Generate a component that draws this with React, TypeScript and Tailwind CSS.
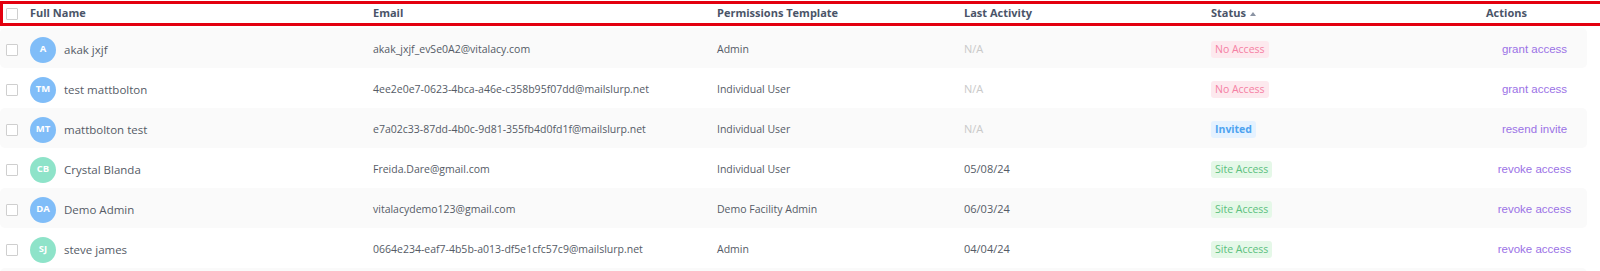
import React from 'react';

type UserRow = {
    id: number;
    initials: string;
    name: string;
    email: string;
    template: string;
    lastActivity: string;
    status: 'No Access' | 'Invited' | 'Site Access';
    action: string;
    avatar: 'blue' | 'green';
};

const users: UserRow[] = [
    { id: 1, initials: 'A', name: 'akak jxjf', email: 'akak_jxjf_evSe0A2@vitalacy.com', template: 'Admin', lastActivity: 'N/A', status: 'No Access', action: 'grant access', avatar: 'blue' },
    { id: 2, initials: 'TM', name: 'test mattbolton', email: '4ee2e0e7-0623-4bca-a46e-c358b95f07dd@mailslurp.net', template: 'Individual User', lastActivity: 'N/A', status: 'No Access', action: 'grant access', avatar: 'blue' },
    { id: 3, initials: 'MT', name: 'mattbolton test', email: 'e7a02c33-87dd-4b0c-9d81-355fb4d0fd1f@mailslurp.net', template: 'Individual User', lastActivity: 'N/A', status: 'Invited', action: 'resend invite', avatar: 'blue' },
    { id: 4, initials: 'CB', name: 'Crystal Blanda', email: 'Freida.Dare@gmail.com', template: 'Individual User', lastActivity: '05/08/24', status: 'Site Access', action: 'revoke access', avatar: 'green' },
    { id: 5, initials: 'DA', name: 'Demo Admin', email: 'vitalacydemo123@gmail.com', template: 'Demo Facility Admin', lastActivity: '06/03/24', status: 'Site Access', action: 'revoke access', avatar: 'blue' },
    { id: 6, initials: 'SJ', name: 'steve james', email: '0664e234-eaf7-4b5b-a013-df5e1cfc57c9@mailslurp.net', template: 'Admin', lastActivity: '04/04/24', status: 'Site Access', action: 'revoke access', avatar: 'green' },
];

const cols = 'grid grid-cols-[30px_343px_344px_247px_247px_275px_97px] items-center';

const Checkbox = () => (
    <span className="ml-[6px] block h-[12px] w-[12px] rounded-[1px] border border-[#cfcfcf] bg-white" />
);

const StatusBadge: React.FC<{ status: UserRow['status'] }> = ({ status }) => {
    if (status === 'Invited') {
        return <span className="block rounded-[3px] bg-[#e5f2ff] px-[4px] text-[10.5px] leading-[17px] font-bold text-[#4ea3f0]">Invited</span>;
    }
    if (status === 'No Access') {
        return <span className="block rounded-[3px] bg-[#fde9ee] px-[4px] text-[10.5px] leading-[17px] text-[#f57fa3]">No Access</span>;
    }
    return <span className="block rounded-[3px] bg-[#e5f8e8] px-[4px] text-[10.5px] leading-[17px] text-[#5cc07e]">Site Access</span>;
};

const Row: React.FC<UserRow> = ({ initials, name, email, template, lastActivity, status, action, avatar }) => (
    <div className={`${cols} h-[40px] w-[1587px] rounded-[5px] pt-[3px] odd:bg-[#fafafa] even:bg-white`}>
        <Checkbox />
        <div className="flex items-center gap-[8px]">
            <span
                className={
                    avatar === 'blue'
                        ? 'flex h-[26px] w-[26px] items-center justify-center rounded-full bg-[#80bdf8] text-[9.5px] font-bold text-white'
                        : 'flex h-[26px] w-[26px] items-center justify-center rounded-full bg-[#8ee3c9] text-[9.5px] font-bold text-white'
                }
            >
                {initials}
            </span>
            <span className="text-[11.5px] text-[#555b66]">{name}</span>
        </div>
        <span className="text-[10.5px] text-[#555b66]">{email}</span>
        <span className="text-[10.5px] text-[#555b66]">{template}</span>
        <span className={lastActivity === 'N/A' ? 'text-[11px] text-[#c9c9c9]' : 'text-[11px] text-[#555b66]'}>{lastActivity}</span>
        <div className="flex">
            <StatusBadge status={status} />
        </div>
        <span className="text-center font-['Liberation_Sans',Arial,sans-serif] text-[11.5px] text-[#9b72e6]">{action}</span>
    </div>
);

export default function App() {
    return (
        <div className="h-[271px] w-[1600px] overflow-hidden bg-white font-['Open_Sans',sans-serif]">
            <div className="pt-[1px]">
                <div className={`${cols} h-[25px] w-[1603px] border-[3px] border-[#e3000f]`}>
                    <span className="-ml-[3px] block"><Checkbox /></span>
                    <span className="-ml-[3px] text-[11px] font-bold text-[#4a5468]">Full Name</span>
                    <span className="-ml-[3px] text-[11px] font-bold text-[#4a5468]">Email</span>
                    <span className="-ml-[3px] text-[11px] font-bold text-[#4a5468]">Permissions Template</span>
                    <span className="-ml-[3px] text-[11px] font-bold text-[#4a5468]">Last Activity</span>
                    <span className="-ml-[3px] flex items-center gap-[4px] text-[11px] font-bold text-[#4a5468]">
                        Status
                        <svg width="6" height="4" viewBox="0 0 6 4"><path d="M0 4 L3 0 L6 4 Z" fill="#8a93a3" /></svg>
                    </span>
                    <span className="-ml-[3px] text-[11px] font-bold text-[#4a5468]">Actions</span>
                </div>
            </div>
            <div className="mt-[2px] flex flex-col">
                {users.map((u) => (
                    <Row key={u.id} {...u} />
                ))}
                <div className="h-[40px] w-[1587px] rounded-[5px] bg-[#fafafa]" />
            </div>
        </div>
    );
}
